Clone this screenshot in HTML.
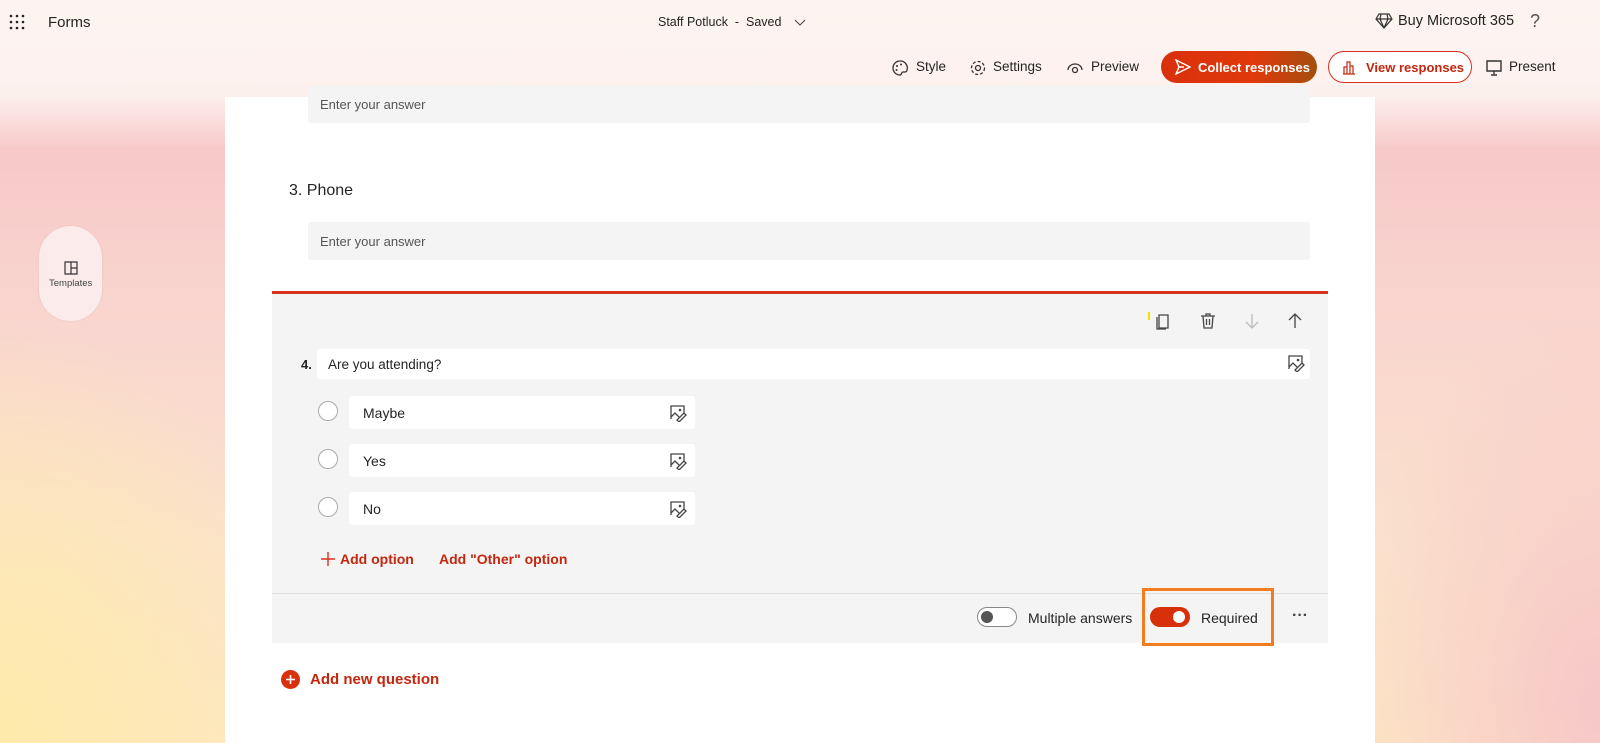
<!DOCTYPE html>
<html><head><meta charset="utf-8"><style>
*{box-sizing:border-box;margin:0;padding:0}
html,body{width:1600px;height:743px;overflow:hidden}
body{font-family:"Liberation Sans",sans-serif;color:#242424;position:relative;
background:radial-gradient(ellipse 320px 420px at 0% 100%,rgba(254,234,170,1) 0%,rgba(254,234,175,.6) 50%,rgba(254,234,175,0) 100%),
radial-gradient(ellipse 260px 400px at 100% 95%,rgba(246,195,200,.9) 0%,rgba(246,195,200,0) 100%),
linear-gradient(180deg,#fdf4f1 0,#fcefec 95px,#f7c9c9 150px,#f9d6cf 330px,#fbe2cc 550px,#fde6c4 743px);}
.hdr{position:absolute;left:0;top:0;width:1600px;height:100px;background:linear-gradient(180deg,#fdf4f1 0,#fdf2ef 78px,rgba(253,242,239,0) 100%)}
.abs{position:absolute}
.t{position:absolute;white-space:nowrap}
.page{position:absolute;left:225px;top:97px;width:1150px;height:646px;background:#fff}
.inp{position:absolute;background:#f4f4f4;border-radius:3px;font-size:13px;color:#555;padding-left:12px;display:flex;align-items:center}
.card{position:absolute;left:272px;top:291px;width:1056px;height:352px;background:#f4f4f4;border-top:3px solid #d9301a}
.opt{position:absolute;left:349px;width:346px;height:33px;background:#fff;border-radius:3px;font-size:14px;padding-left:14px;display:flex;align-items:center}
.radio{position:absolute;left:318px;width:20px;height:20px;border:1px solid #aaa;border-radius:50%;background:#fff}
.img{position:absolute;right:8px;top:8px}
.btn{position:absolute;top:51px;height:32px;border-radius:16px;font-size:13px;font-weight:bold;display:flex;align-items:center;white-space:nowrap}
</style></head><body>
<div class="hdr"></div>
<svg class="abs" style="left:9px;top:14px" width="16" height="16"><g fill="#222"><circle cx="2" cy="2" r="1.3"/><circle cx="8" cy="2" r="1.3"/><circle cx="14" cy="2" r="1.3"/><circle cx="2" cy="8" r="1.3"/><circle cx="8" cy="8" r="1.3"/><circle cx="14" cy="8" r="1.3"/><circle cx="2" cy="14" r="1.3"/><circle cx="8" cy="14" r="1.3"/><circle cx="14" cy="14" r="1.3"/></g></svg>
<div class="t" style="left:48px;top:14px;font-size:15px">Forms</div>
<div class="t" style="left:658px;top:15px;font-size:12.5px">Staff Potluck &nbsp;- &nbsp;Saved</div>
<svg class="abs" style="left:794px;top:19px" width="12" height="8"><path d="M1 1l5 5 5-5" stroke="#444" fill="none"/></svg>
<svg class="abs" style="left:1375px;top:13px" width="18" height="16"><path d="M4 1h10l3 5-8 9-8-9z M1 6h16 M6 1l-1 5 4 9 4-9-1-5" stroke="#333" fill="none" stroke-width="1.2"/></svg>
<div class="t" style="left:1398px;top:13px;font-size:14.5px">Buy Microsoft 365</div>
<div class="t" style="left:1530px;top:11px;font-size:18px;color:#555">?</div>

<svg class="abs" style="left:891px;top:59px" width="18" height="18"><path d="M9 2a7 7 0 1 0 0 14c2 0 1-3 3-3h2a2 2 0 0 0 2-2A7 7 0 0 0 9 2z" stroke="#333" fill="none" stroke-width="1.3"/><circle cx="6" cy="7" r="1" fill="#333"/><circle cx="10" cy="5.5" r="1" fill="#333"/><circle cx="5.5" cy="11" r="1" fill="#333"/></svg>
<div class="t" style="left:916px;top:59px;font-size:13.5px">Style</div>
<svg class="abs" style="left:969px;top:59px" width="18" height="18"><circle cx="9" cy="9" r="2.5" stroke="#333" fill="none" stroke-width="1.3"/><circle cx="9" cy="9" r="6.5" stroke="#333" fill="none" stroke-width="1.3" stroke-dasharray="3 2"/></svg>
<div class="t" style="left:993px;top:59px;font-size:13.5px">Settings</div>
<svg class="abs" style="left:1066px;top:60px" width="18" height="16"><path d="M2 10a7 6 0 0 1 14 0" stroke="#333" fill="none" stroke-width="1.3"/><circle cx="9" cy="10" r="2.5" stroke="#333" fill="none" stroke-width="1.3"/></svg>
<div class="t" style="left:1091px;top:59px;font-size:13.5px">Preview</div>
<div class="btn" style="left:1161px;width:156px;background:linear-gradient(90deg,#d9300c,#e0390a 60%,#a34f10);color:#fff;padding-left:37px">Collect responses</div>
<svg class="abs" style="left:1174px;top:59px" width="17" height="16"><path d="M2 1l14 7-14 7 3-7z M5 8h5" stroke="#fff" fill="none" stroke-width="1.4"/></svg>
<div class="btn" style="left:1328px;width:144px;border:1px solid #d9301a;background:#fff;color:#c4260e;padding-left:37px">View responses</div>
<svg class="abs" style="left:1342px;top:59px" width="14" height="16"><path d="M1 15h12 M2 15V8h3v7 M5 15V3h3v12 M8 15V7h3v8" stroke="#c4260e" fill="none" stroke-width="1.2"/></svg>
<svg class="abs" style="left:1486px;top:60px" width="16" height="16"><path d="M1 1h14v10H1z M8 11v3 M5 15h6" stroke="#333" fill="none" stroke-width="1.4"/></svg>
<div class="t" style="left:1509px;top:59px;font-size:13.5px">Present</div>

<div class="abs" style="left:39px;top:226px;width:63px;height:95px;border-radius:32px;background:#fbeceb;box-shadow:0 0 2px rgba(0,0,0,.08)"></div>
<svg class="abs" style="left:64px;top:261px" width="14" height="14"><path d="M1 1h12v12H1z M7 1v12 M7 7h6" stroke="#333" fill="none" stroke-width="1.2"/></svg>
<div class="t" style="left:49px;top:278px;font-size:9.5px;color:#444">Templates</div>

<div class="page"></div>
<div class="inp" style="left:308px;top:86px;width:1002px;height:37px">Enter your answer</div>
<div class="t" style="left:289px;top:182px;font-size:16px">3. Phone</div>
<div class="inp" style="left:308px;top:222px;width:1002px;height:38px">Enter your answer</div>

<div class="card"></div>
<div class="abs" style="left:1148px;top:312px;width:2px;height:8px;background:#f0e000"></div>
<svg class="abs" style="left:1154px;top:312px" width="18" height="18"><path d="M5 3h9v13H5z" stroke="#444" fill="none" stroke-width="1.3"/><path d="M3 5v12h9" stroke="#444" fill="none" stroke-width="1.3"/></svg>
<svg class="abs" style="left:1199px;top:312px" width="18" height="18"><path d="M2 4h14 M7 4V2h4v2 M4 4l1 12h8l1-12 M7.5 7v6 M10.5 7v6" stroke="#444" fill="none" stroke-width="1.3"/></svg>
<svg class="abs" style="left:1243px;top:312px" width="18" height="18"><path d="M9 2v14 M3 10l6 6 6-6" stroke="#bbb" fill="none" stroke-width="1.3"/></svg>
<svg class="abs" style="left:1286px;top:312px" width="18" height="18"><path d="M9 16V2 M3 8l6-6 6 6" stroke="#444" fill="none" stroke-width="1.3"/></svg>

<div class="t" style="left:301px;top:357px;font-size:13px;font-weight:bold">4.</div>
<div class="abs" style="left:317px;top:349px;width:993px;height:30px;background:#fff;border-radius:3px"></div>
<div class="t" style="left:328px;top:357px;font-size:13.5px">Are you attending?</div>
<svg class="abs" style="left:1287px;top:354px" width="18" height="18"><path d="M2 15V2h13v7 M2 13l4-4 4 4 M8 16l7-7 2 2-7 7z" stroke="#444" fill="none" stroke-width="1.3"/><circle cx="11" cy="6" r="1.3" fill="#444"/></svg>

<div class="radio" style="top:401px"></div>
<div class="opt" style="top:396px">Maybe<svg class="img" width="18" height="18"><path d="M2 15V2h13v7 M2 13l4-4 4 4 M8 16l7-7 2 2-7 7z" stroke="#444" fill="none" stroke-width="1.3"/><circle cx="11" cy="6" r="1.3" fill="#444"/></svg></div>
<div class="radio" style="top:449px"></div>
<div class="opt" style="top:444px">Yes<svg class="img" width="18" height="18"><path d="M2 15V2h13v7 M2 13l4-4 4 4 M8 16l7-7 2 2-7 7z" stroke="#444" fill="none" stroke-width="1.3"/><circle cx="11" cy="6" r="1.3" fill="#444"/></svg></div>
<div class="radio" style="top:497px"></div>
<div class="opt" style="top:492px">No<svg class="img" width="18" height="18"><path d="M2 15V2h13v7 M2 13l4-4 4 4 M8 16l7-7 2 2-7 7z" stroke="#444" fill="none" stroke-width="1.3"/><circle cx="11" cy="6" r="1.3" fill="#444"/></svg></div>

<svg class="abs" style="left:320px;top:551px" width="16" height="16"><path d="M8 1v14 M1 8h14" stroke="#d9301a" stroke-width="1.4"/></svg>
<div class="t" style="left:340px;top:551px;font-size:14px;color:#c4260e;font-weight:bold">Add option</div>
<div class="t" style="left:439px;top:551px;font-size:14px;color:#c4260e;font-weight:bold">Add "Other" option</div>

<div class="abs" style="left:272px;top:593px;width:1056px;height:1px;background:#e0e0e0"></div>
<div class="abs" style="left:977px;top:607px;width:40px;height:20px;border:1px solid #888;border-radius:10px;background:#fff"></div>
<div class="abs" style="left:981px;top:611px;width:12px;height:12px;border-radius:50%;background:#555"></div>
<div class="t" style="left:1028px;top:610px;font-size:14px">Multiple answers</div>
<div class="abs" style="left:1142px;top:588px;width:132px;height:58px;border:3px solid #f47c20"></div>
<div class="abs" style="left:1150px;top:607px;width:40px;height:20px;border-radius:10px;background:#d9300c"></div>
<div class="abs" style="left:1173px;top:611px;width:12px;height:12px;border-radius:50%;background:#fff"></div>
<div class="t" style="left:1201px;top:610px;font-size:14px">Required</div>
<div class="t" style="left:1292px;top:607px;font-size:16px;color:#444;font-weight:bold">···</div>

<div class="abs" style="left:281px;top:670px;width:19px;height:19px;border-radius:50%;background:#d9300c"></div>
<svg class="abs" style="left:284px;top:673px" width="13" height="13"><path d="M6.5 2v9 M2 6.5h9" stroke="#fff" stroke-width="1.6"/></svg>
<div class="t" style="left:310px;top:671px;font-size:15px;font-weight:bold;color:#c4260e">Add new question</div>
</body></html>
